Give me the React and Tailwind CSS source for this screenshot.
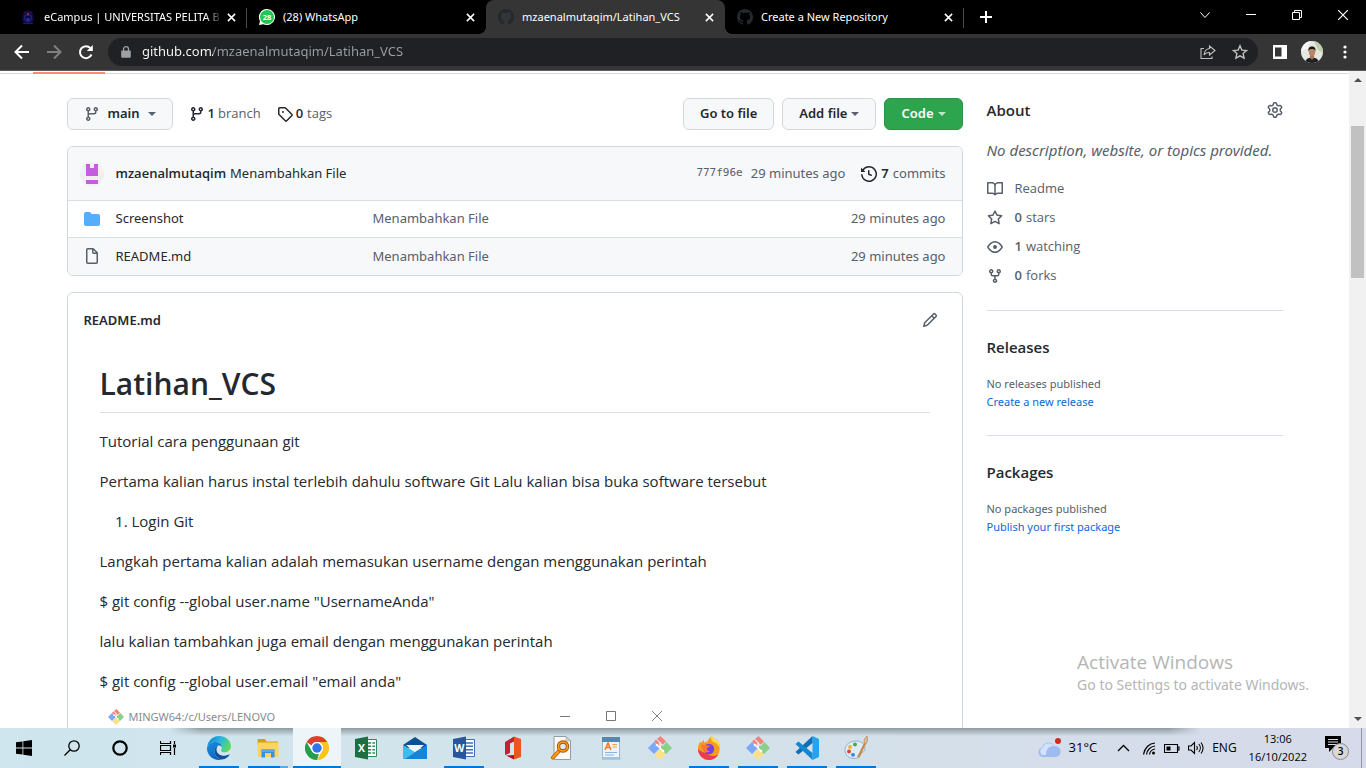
import React from "react";

const P = {
  branch:
    "M11.75 2.5a.75.75 0 100 1.5.75.75 0 000-1.5zm-2.25.75a2.25 2.25 0 113 2.122V6A2.5 2.5 0 0110 8.5H6a1 1 0 00-1 1v1.128a2.251 2.251 0 11-1.5 0V5.372a2.25 2.25 0 111.5 0v1.836A2.492 2.492 0 016 7h4a1 1 0 001-1v-.628A2.25 2.25 0 019.5 3.25zM4.25 12a.75.75 0 100 1.5.75.75 0 000-1.5zM3.5 3.25a.75.75 0 111.5 0 .75.75 0 01-1.5 0z",
  tag: "M2.5 7.775V2.75a.25.25 0 01.25-.25h5.025a.25.25 0 01.177.073l6.25 6.25a.25.25 0 010 .354l-5.025 5.025a.25.25 0 01-.354 0l-6.25-6.25a.25.25 0 01-.073-.177zm-1.5 0V2.75C1 1.784 1.784 1 2.75 1h5.025c.464 0 .91.184 1.238.513l6.25 6.25a1.75 1.75 0 010 2.474l-5.026 5.026a1.75 1.75 0 01-2.474 0l-6.25-6.25A1.75 1.75 0 011 7.775zM6 5a1 1 0 100 2 1 1 0 000-2z",
  history:
    "M1.643 3.143L.427 1.927A.25.25 0 000 2.104V5.75c0 .138.112.25.25.25h3.646a.25.25 0 00.177-.427L2.715 4.215a6.5 6.5 0 11-1.18 4.458.75.75 0 10-1.493.154 8.001 8.001 0 101.6-5.684zM7.75 4a.75.75 0 01.75.75v2.992l2.028.812a.75.75 0 01-.557 1.392l-2.5-1A.75.75 0 017 8.25v-3.5A.75.75 0 017.75 4z",
  folder:
    "M1.75 1A1.75 1.75 0 000 2.75v10.5C0 14.216.784 15 1.75 15h12.5A1.75 1.75 0 0016 13.25v-8.5A1.75 1.75 0 0014.25 3h-6.5a.25.25 0 01-.2-.1l-.9-1.2c-.33-.44-.85-.7-1.4-.7h-3.5z",
  file: "M3.75 1.5a.25.25 0 00-.25.25v12.5c0 .138.112.25.25.25h8.5a.25.25 0 00.25-.25V6H9.75A1.75 1.75 0 018 4.25V1.5H3.75zm5.75.56v2.19c0 .138.112.25.25.25h2.19L9.5 2.06zM2 1.75C2 .784 2.784 0 3.75 0h5.086c.464 0 .909.184 1.237.513l3.414 3.414c.329.328.513.773.513 1.237v9.086A1.75 1.75 0 0112.25 16h-8.5A1.75 1.75 0 012 14.25V1.75z",
  pencil:
    "M11.013 1.427a1.75 1.75 0 012.474 0l1.086 1.086a1.75 1.75 0 010 2.474l-8.61 8.61c-.21.21-.47.364-.756.445l-3.251.93a.75.75 0 01-.927-.928l.929-3.25a1.75 1.75 0 01.445-.758l8.61-8.61zm1.414 1.06a.25.25 0 00-.354 0L10.811 3.75l1.439 1.44 1.263-1.263a.25.25 0 000-.354l-1.086-1.086zM11.189 6.25L9.75 4.81l-6.286 6.287a.25.25 0 00-.064.108l-.558 1.953 1.953-.558a.249.249 0 00.108-.064l6.286-6.286z",
  book: "M0 1.75A.75.75 0 01.75 1h4.253c1.227 0 2.317.59 3 1.501A3.744 3.744 0 0111.006 1h4.245a.75.75 0 01.75.75v10.5a.75.75 0 01-.75.75h-4.507a2.25 2.25 0 00-1.591.659l-.622.621a.75.75 0 01-1.06 0l-.622-.621A2.25 2.25 0 005.258 13H.75a.75.75 0 01-.75-.75V1.75zm8.755 3a2.25 2.25 0 012.25-2.25H14.5v9h-3.757c-.71 0-1.4.201-1.992.572l.004-7.322zm-1.504 7.324l.004-5.073-.002-2.253A2.25 2.25 0 005.003 2.5H1.5v9h3.757a3.75 3.75 0 011.994.574z",
  star: "M8 .25a.75.75 0 01.673.418l1.882 3.815 4.21.612a.75.75 0 01.416 1.279l-3.046 2.97.719 4.192a.75.75 0 01-1.088.791L8 12.347l-3.766 1.98a.75.75 0 01-1.088-.79l.72-4.194L.818 6.374a.75.75 0 01.416-1.28l4.21-.611L7.327.668A.75.75 0 018 .25zm0 2.445L6.615 5.5a.75.75 0 01-.564.41l-3.097.45 2.24 2.184a.75.75 0 01.216.664l-.528 3.084 2.769-1.456a.75.75 0 01.698 0l2.77 1.456-.53-3.084a.75.75 0 01.216-.664l2.24-2.183-3.096-.45a.75.75 0 01-.564-.41L8 2.694v.001z",
  eye: "M1.679 7.932c.412-.621 1.242-1.75 2.366-2.717C5.175 4.242 6.527 3.5 8 3.5c1.473 0 2.824.742 3.955 1.715 1.124.967 1.954 2.096 2.366 2.717a.119.119 0 010 .136c-.412.621-1.242 1.75-2.366 2.717C10.825 11.758 9.473 12.5 8 12.5c-1.473 0-2.824-.742-3.955-1.715C2.92 9.818 2.09 8.69 1.679 8.068a.119.119 0 010-.136zM8 2c-1.981 0-3.67.992-4.933 2.078C1.797 5.169.88 6.423.43 7.1a1.619 1.619 0 000 1.798c.45.678 1.367 1.932 2.637 3.024C4.329 13.008 6.019 14 8 14c1.981 0 3.67-.992 4.933-2.078 1.27-1.091 2.187-2.345 2.637-3.023a1.619 1.619 0 000-1.798c-.45-.678-1.367-1.932-2.637-3.023C11.671 2.992 9.981 2 8 2zm0 8a2 2 0 100-4 2 2 0 000 4z",
  fork: "M5 3.25a.75.75 0 11-1.5 0 .75.75 0 011.5 0zm0 2.122a2.25 2.25 0 10-1.5 0v.878A2.25 2.25 0 005.75 8.5h1.5v2.128a2.251 2.251 0 101.5 0V8.5h1.5a2.25 2.25 0 002.25-2.25v-.878a2.25 2.25 0 10-1.5 0v.878a.75.75 0 01-.75.75h-4.5A.75.75 0 015 6.25v-.878zm3.75 7.378a.75.75 0 11-1.5 0 .75.75 0 011.5 0zm3-8.75a.75.75 0 100-1.5.75.75 0 000 1.5z",
  gear: "M7.429 1.525a6.593 6.593 0 011.142 0c.036.003.108.036.137.146l.289 1.105c.147.56.55.967.997 1.189.174.086.341.183.501.29.417.278.97.423 1.53.27l1.102-.303c.11-.03.175.016.195.046.219.31.41.641.573.989.014.031.022.11-.059.19l-.815.806c-.411.406-.562.957-.53 1.456a4.588 4.588 0 010 .582c-.032.499.119 1.05.53 1.456l.815.806c.08.08.073.159.059.19a6.494 6.494 0 01-.573.99c-.02.029-.086.074-.195.045l-1.103-.303c-.559-.153-1.112-.008-1.529.27-.16.107-.327.204-.5.29-.449.222-.851.628-.998 1.189l-.289 1.105c-.029.11-.101.143-.137.146a6.613 6.613 0 01-1.142 0c-.036-.003-.108-.037-.137-.146l-.289-1.105c-.147-.56-.55-.967-.997-1.189a4.502 4.502 0 01-.501-.29c-.417-.278-.97-.423-1.53-.27l-1.102.303c-.11.03-.175-.016-.195-.046a6.492 6.492 0 01-.573-.989c-.014-.031-.022-.11.059-.19l.815-.806c.411-.406.562-.957.53-1.456a4.587 4.587 0 010-.582c.032-.499-.119-1.05-.53-1.456l-.815-.806c-.08-.08-.073-.159-.059-.19a6.44 6.44 0 01.573-.99c.02-.029.086-.075.195-.045l1.103.303c.559.153 1.112.008 1.529-.27.16-.107.327-.204.5-.29.449-.222.851-.628.998-1.189l.289-1.105c.029-.11.101-.143.137-.146zM8 0c-.236 0-.47.01-.701.03-.743.065-1.29.615-1.458 1.261l-.29 1.106c-.017.066-.078.158-.211.224a5.994 5.994 0 00-.668.386c-.123.082-.233.09-.3.071L3.27 2.776c-.644-.177-1.392.02-1.82.63a7.977 7.977 0 00-.704 1.217c-.315.675-.111 1.422.363 1.891l.815.806c.05.048.098.147.088.294a6.084 6.084 0 000 .772c.01.147-.038.246-.088.294l-.815.806c-.474.469-.678 1.216-.363 1.891.2.428.436.835.704 1.218.428.609 1.176.806 1.82.63l1.103-.303c.066-.019.176-.011.299.071.213.143.436.272.668.386.133.066.194.158.212.224l.289 1.106c.169.646.715 1.196 1.458 1.26a8.094 8.094 0 001.402 0c.743-.064 1.29-.614 1.458-1.26l.29-1.106c.017-.066.078-.158.211-.224a5.98 5.98 0 00.668-.386c.123-.082.233-.09.3-.071l1.102.302c.644.177 1.392-.02 1.82-.63.268-.382.505-.789.704-1.217.315-.675.111-1.422-.364-1.891l-.814-.806c-.05-.048-.098-.147-.088-.294a6.1 6.1 0 000-.772c-.01-.147.039-.246.088-.294l.814-.806c.475-.469.679-1.216.364-1.891a7.992 7.992 0 00-.704-1.218c-.428-.609-1.176-.806-1.82-.63l-1.103.303c-.066.019-.176.011-.299-.071a5.991 5.991 0 00-.668-.386c-.133-.066-.194-.158-.212-.224L10.16 1.29C9.99.645 9.444.095 8.701.031A8.094 8.094 0 008 0zm1.5 8a1.5 1.5 0 11-3 0 1.5 1.5 0 013 0zM11 8a3 3 0 11-6 0 3 3 0 016 0z",
  github:
    "M8 0C3.58 0 0 3.58 0 8c0 3.54 2.29 6.53 5.47 7.59.4.07.55-.17.55-.38 0-.19-.01-.82-.01-1.49-2.01.37-2.53-.49-2.69-.94-.09-.23-.48-.94-.82-1.13-.28-.15-.68-.52-.01-.53.63-.01 1.08.58 1.23.82.72 1.21 1.87.87 2.33.66.07-.52.28-.87.51-1.07-1.78-.2-3.64-.89-3.64-3.95 0-.87.31-1.59.82-2.15-.08-.2-.36-1.02.08-2.12 0 0 .67-.21 2.2.82.64-.18 1.32-.27 2-.27.68 0 1.36.09 2 .27 1.53-1.04 2.2-.82 2.2-.82.44 1.1.16 1.92.08 2.12.51.56.82 1.27.82 2.15 0 3.07-1.87 3.75-3.65 3.95.29.25.54.73.54 1.48 0 1.07-.01 1.93-.01 2.2 0 .21.15.46.55.38A8.013 8.013 0 0016 8c0-4.42-3.58-8-8-8z",
};

function Oct({ name, className = "" }) {
  return (
    <svg viewBox="0 0 16 16" fill="currentColor" fillRule="evenodd" className={`size-4 shrink-0 ${className}`} aria-hidden="true">
      <path d={P[name]} />
    </svg>
  );
}

function Stroke({ d, className = "size-4", w = 1, box = "0 0 16 16", children }) {
  return (
    <svg viewBox={box} fill="none" stroke="currentColor" strokeWidth={w} className={`shrink-0 ${className}`} aria-hidden="true">
      <path d={d} />
      {children}
    </svg>
  );
}

const Caret = ({ className = "" }) => (
  <svg viewBox="0 0 8 4" className={`h-1 w-2 shrink-0 ${className}`} fill="currentColor" aria-hidden="true">
    <path d="M0 0h8L4 4z" />
  </svg>
);

/* ---------- browser chrome ---------- */

const CampusIcon = () => (
  <svg viewBox="0 0 16 16" className="size-4 shrink-0" aria-hidden="true">
    <path d="M8 1l5 3 1 6-2 4.500H4L2 10l1-6z" fill="#0b0b3e" />
    <circle cx="8" cy="9" r="3.500" fill="none" stroke="#20208a" strokeWidth="1.300" />
    <path d="M3 14.500h10M4 4.500l2-2M12 4.500l-2-2" stroke="#1c1c70" strokeWidth="1.200" />
    <path d="M8 3c1 1.500 1.200 2.500 0 4-1.200-1.500-1-2.500 0-4z" fill="#c22a17" />
    <path d="M6 9.500h4l-1 2H7z" fill="#3438b0" />
  </svg>
);

const WhatsAppIcon = () => (
  <svg viewBox="0 0 16 16" className="size-4 shrink-0" aria-hidden="true">
    <path d="M8 0a8 8 0 11-3.500 15.200L0 16l1-4A8 8 0 018 0z" fill="#fff" />
    <circle cx="8" cy="8" r="7" fill="#1fc94f" />
    <text x="8" y="10.600" fontSize="7.500" fontWeight="700" textAnchor="middle" fill="#fff" fontFamily="Open Sans, sans-serif">
      28
    </text>
  </svg>
);

const GithubIcon = () => <Oct name="github" className="text-[#24292f]" />;

const tabs = [
  { title: "eCampus | UNIVERSITAS PELITA B", icon: CampusIcon, fade: true },
  { title: "(28) WhatsApp", icon: WhatsAppIcon },
  { title: "mzaenalmutaqim/Latihan_VCS", icon: GithubIcon, active: true },
  { title: "Create a New Repository", icon: GithubIcon },
];

function Tab({ title, icon: Icon, active, fade, divider }) {
  return (
    <div
      className={`relative flex h-[34px] w-[239px] min-w-0 items-center pr-2 pl-3 ${active ? "rounded-t-lg bg-[#353535]" : ""}`}
    >
      {active && (
        <>
          <span className="absolute bottom-0 -left-2 size-2 bg-[radial-gradient(circle_at_0_0,#000_8px,#353535_8px)]" />
          <span className="absolute -right-2 bottom-0 size-2 bg-[radial-gradient(circle_at_100%_0,#000_8px,#353535_8px)]" />
        </>
      )}
      <Icon />
      <a
        href="#tab"
        className={`ml-2 min-w-0 flex-1 overflow-hidden font-['Noto_Sans','Open_Sans',sans-serif] text-[11px] whitespace-nowrap text-white ${
          fade ? "mask-r-from-90% mask-r-to-100%" : ""
        }`}
      >
        {title}
      </a>
      <button aria-label={`Close ${title}`} className="flex size-4 items-center justify-center text-white">
        <Stroke d="M1 1l8 8M9 1l-8 8" box="0 0 10 10" className="size-[9px]" w={1.7} />
      </button>
      {divider && <span className="absolute top-2 right-0 h-5 w-px bg-[#4a4a4a]" />}
    </div>
  );
}

function TabBar() {
  return (
    <div className="flex h-[34px] items-center bg-black pl-2 text-white">
      {tabs.map((t, i) => (
        <Tab key={t.title} {...t} divider={i === 0 || i === 3} />
      ))}
      <button aria-label="New tab" className="ml-2 flex size-7 items-center justify-center">
        <Stroke d="M6 0v12M0 6h12" box="0 0 12 12" className="size-3" w={2} />
      </button>
      <div className="ml-auto flex h-full items-start pb-1">
        <button aria-label="Search tabs" className="flex h-[29px] w-[46px] items-center justify-center">
          <Stroke d="M.5 .5l4.500 5 4.500-5" box="0 0 10 6" className="h-[6px] w-[10px]" w={1} />
        </button>
        <button aria-label="Minimize" className="flex h-[29px] w-[46px] items-center justify-center">
          <span className="h-px w-[10px] bg-white" />
        </button>
        <button aria-label="Restore" className="flex h-[29px] w-[46px] items-center justify-center">
          <Stroke d="M.5 2.500h7v7h-7zM2.500 2.500v-2h7v7h-2" box="0 0 10 10" className="size-[10px]" />
        </button>
        <button aria-label="Close" className="flex h-[29px] w-[46px] items-center justify-center">
          <Stroke d="M0 0l10 10M10 0L0 10" box="0 0 10 10" className="size-[10px]" w={1.2} />
        </button>
      </div>
    </div>
  );
}

function Toolbar() {
  return (
    <div className="flex h-[37px] items-center border-b border-[#5c5c5c] bg-[#353535] pr-[13px] pl-[14px] text-white">
      <button aria-label="Back" className="mr-4">
        <Stroke d="M15 8H2M8 1.500L1.500 8 8 14.500" w={2} />
      </button>
      <button aria-label="Forward" className="mr-4 text-[#818181]">
        <Stroke d="M1 8h13M8 1.500L14.500 8 8 14.500" w={2} />
      </button>
      <button aria-label="Reload" className="mr-[14px]">
        <svg viewBox="0 0 16 16" className="size-4" aria-hidden="true">
          <path d="M13.500 10.500A6 6 0 1112.500 4.200" fill="none" stroke="#fff" strokeWidth="2" />
          <path d="M14.800 1v6H8.800z" fill="#fff" />
        </svg>
      </button>
      <div className="flex h-7 min-w-0 flex-1 items-center rounded-full bg-[#202124] pr-[10px] pl-[13px]">
        <svg viewBox="0 0 10 12" className="h-3 w-[10px] shrink-0" aria-hidden="true">
          <path d="M1 4.500h8a.8.8 0 01.8.8v5.400a1 1 0 01-1 1H1.200a1 1 0 01-1-1V5.300a.8.8 0 01.8-.8z" fill="#9aa0a6" />
          <path d="M2.500 5V3a2.500 2.300 0 015 0v2" fill="none" stroke="#9aa0a6" strokeWidth="1.300" />
        </svg>
        <input
          aria-label="Address"
          defaultValue="github.com/mzaenalmutaqim/Latihan_VCS"
          className="ml-[11px] min-w-0 flex-1 bg-[linear-gradient(90deg,#ffffff_71px,#9aa0a6_71px)] bg-clip-text font-['Noto_Sans','Open_Sans',sans-serif] text-[13px] text-transparent outline-none"
        />
        <button aria-label="Share" className="mr-4 text-[#c0c0c0]">
          <Stroke
            d="M4 4.500H1v10h11v-2M9.500 2l5.500 4.500-5.500 4.500V8.500C7 8.500 5.200 9.200 4 11c.3-3 2-6 5.500-6.500z"
            w={1.1}
          />
        </button>
        <button aria-label="Bookmark" className="text-[#c0c0c0]">
          <Stroke d="M8 1.800l1.900 4.300 4.700.4-3.500 3.100 1 4.600L8 11.800l-4.100 2.400 1-4.600L1.400 6.500l4.700-.4z" w={1.4} />
        </button>
      </div>
      <button aria-label="Side panel" className="ml-[15px]">
        <svg viewBox="0 0 14 14" className="size-[14px]" aria-hidden="true">
          <path d="M0 0h14v14H0zM2 2.500v9h6.500v-9z" fill="#fff" fillRule="evenodd" />
        </svg>
      </button>
      <button aria-label="Profile" className="ml-[14px]">
        <svg viewBox="0 0 22 22" className="size-[22px] rounded-full" aria-hidden="true">
          <rect width="22" height="22" fill="#e4e6e0" />
          <path d="M13 0h9v12l-5-3z" fill="#bfd0a8" />
          <path d="M0 0h10L6 8 0 10z" fill="#f6f6f4" />
          <path d="M4 22c1-5 4-5.500 7-5.500s6 .5 7 5.500z" fill="#1f1f24" />
          <path d="M9 13h4v4l-2 2-2-2z" fill="#a67656" />
          <ellipse cx="11" cy="11" rx="3.200" ry="4.200" fill="#b98666" />
          <path d="M7.400 10.500C7 6.500 9 5.500 11 5.500s4 1 3.600 5c-.6-2-1.600-2.500-3.600-2.500s-3 .5-3.600 2.500z" fill="#17171a" />
        </svg>
      </button>
      <button aria-label="Menu" className="ml-[14px] flex w-4 justify-center">
        <svg viewBox="0 0 4 14" className="h-[14px] w-1" fill="#fff" aria-hidden="true">
          <circle cx="2" cy="2" r="1.600" />
          <circle cx="2" cy="7" r="1.600" />
          <circle cx="2" cy="12" r="1.600" />
        </svg>
      </button>
    </div>
  );
}

/* ---------- repository page ---------- */

const btn =
  "flex h-8 items-center rounded-md border border-[#d5d8db] bg-[#f6f8fa] px-4 font-['Noto_Sans','Open_Sans',sans-serif] text-[13px] font-semibold text-[#24292f]";

const files = [
  { name: "Screenshot", icon: "folder", tint: "text-[#54aeff]", row: "" },
  { name: "README.md", icon: "file", tint: "text-[#57606a]", row: "bg-[#f6f8fa]" },
];

function FileActions() {
  return (
    <div className="mb-4 flex items-center">
      <button className={btn}>
        <Oct name="branch" className="mr-2 text-[#57606a]" />
        main
        <Caret className="ml-2 text-[#57606a]" />
      </button>
      <a href="#branches" className="ml-4 flex items-center text-[13px] text-[#57606a]">
        <Oct name="branch" className="mr-[3px] text-[#24292f]" />
        <strong className="mr-[3px] font-semibold text-[#24292f]">1</strong>branch
      </a>
      <a href="#tags" className="ml-4 flex items-center text-[13px] text-[#57606a]">
        <Oct name="tag" className="mr-[3px] text-[#24292f]" />
        <strong className="mr-1 font-semibold text-[#24292f]">0</strong>tags
      </a>
      <div className="ml-auto flex gap-2">
        <button className={btn}>Go to file</button>
        <button className={btn}>
          Add file <Caret className="ml-1 text-[#57606a]" />
        </button>
        <button className="flex h-8 items-center rounded-md border border-[#2a9449] bg-[#2da44e] px-4 font-['Noto_Sans','Open_Sans',sans-serif] text-[13px] font-semibold text-white">
          Code <Caret className="ml-1 text-[#c0e4ca]" />
        </button>
      </div>
    </div>
  );
}

function FileBox() {
  return (
    <section className="mb-4 overflow-hidden rounded-md border border-[#d0d7de] font-['Noto_Sans','Open_Sans',sans-serif] text-[13px]">
      <div className="flex h-[53px] items-center bg-[#f6f8fa] px-4">
        <svg viewBox="0 0 24 24" className="-ml-1 size-6 shrink-0 rounded-full" aria-hidden="true">
          <rect width="24" height="24" fill="#f0f0f0" />
          <path d="M6 2h4v4h4V2h4v12H6zM6 18h12v4H6z" fill="#c35fdc" />
        </svg>
        <a href="#author" className="ml-3 font-['Open_Sans','Noto_Sans',sans-serif] font-semibold text-[#24292f]">
          mzaenalmutaqim
        </a>
        <a href="#commit" className="ml-1 text-[#24292f]">
          Menambahkan File
        </a>
        <a href="#sha" className="ml-auto font-['DejaVu_Sans_Mono','Liberation_Mono',monospace] text-[11px] text-[#57606a]">
          777f96e
        </a>
        <span className="ml-2 text-[#57606a]">29 minutes ago</span>
        <a href="#commits" className="ml-4 flex items-center text-[#57606a]">
          <Oct name="history" className="mr-1 text-[#24292f]" />
          <strong className="mr-1 font-semibold text-[#24292f]">7</strong>commits
        </a>
      </div>
      <table className="w-full table-fixed">
        <tbody>
          {files.map((f) => (
            <tr key={f.name} className={`h-[37px] border-t border-[#d8dee4] ${f.row}`}>
              <td className="w-12 pl-4">
                <Oct name={f.icon} className={f.tint} />
              </td>
              <td className="w-[257px]">
                <a href="#file" className="text-[#24292f]">
                  {f.name}
                </a>
              </td>
              <td>
                <a href="#message" className="text-[#57606a]">
                  Menambahkan File
                </a>
              </td>
              <td className="w-32 pr-4 text-right text-[#57606a]">29 minutes ago</td>
            </tr>
          ))}
        </tbody>
      </table>
    </section>
  );
}

const GitLogo = ({ className }) => (
  <svg viewBox="0 0 24 24" className={className} aria-hidden="true">
    <path d="M0 12l6-6 6 6-6 6z" fill="#7aa9f7" />
    <path d="M12.500 0l5.500 5.500-3 3-2-1.500-1 4.500-6-6 2-2 3 3 1-1-3-2.500z" fill="#f4827b" />
    <path d="M18.500 6L24 12l-6 6-5-5v-3l2.500-.5z" fill="#8bd08a" />
    <path d="M12 12.500l6 6-6 5.500-5.500-5.500z" fill="#fbe08a" />
    <path d="M9 9l6 6M12 12V6" stroke="#fff" strokeWidth="1.300" />
    <circle cx="9" cy="9" r="1.300" fill="#fff" />
    <circle cx="15" cy="15" r="1.300" fill="#fff" />
  </svg>
);

function Readme() {
  return (
    <section className="rounded-md border border-[#d0d7de] text-[15px] leading-6 text-[#24292f]">
      <div className="flex h-[55px] items-center justify-between px-4">
        <a href="#readme" className="font-['Noto_Sans','Open_Sans',sans-serif] text-[13px] font-semibold">
          README.md
        </a>
        <button aria-label="Edit this file" className="mr-2 text-[#57606a]">
          <Oct name="pencil" />
        </button>
      </div>
      <article className="px-8 pt-4">
        <h1 className="mb-4 border-b border-[#d8dee4] pb-2 text-[30px] leading-10 font-semibold">Latihan_VCS</h1>
        <p className="mb-4">Tutorial cara penggunaan git</p>
        <p className="mb-4">
          Pertama kalian harus instal terlebih dahulu software Git Lalu kalian bisa buka software tersebut
        </p>
        <ol className="mb-4 list-decimal pl-8">
          <li>Login Git</li>
        </ol>
        <p className="mb-4">Langkah pertama kalian adalah memasukan username dengan menggunakan perintah</p>
        <p className="mb-4">$ git config --global user.name "UsernameAnda"</p>
        <p className="mb-4">lalu kalian tambahkan juga email dengan menggunakan perintah</p>
        <p className="mb-3">$ git config --global user.email "email anda"</p>
        <figure className="flex h-60 w-[570px] items-start px-2 pt-1 text-[#8a8a8a]">
          <GitLogo className="size-4 shrink-0" />
          <figcaption className="ml-[5px] font-['Noto_Sans','Open_Sans',sans-serif] text-[11px] leading-4">
            MINGW64:/c/Users/LENOVO
          </figcaption>
          <span className="ml-auto flex items-center gap-9 pt-[2px] text-[#777]">
            <Stroke d="M0 5.500h10" box="0 0 10 10" className="size-[10px]" />
            <Stroke d="M.5 .5h9v9h-9z" box="0 0 10 10" className="size-[10px]" />
            <Stroke d="M0 0l10 10M10 0L0 10" box="0 0 10 10" className="size-[10px]" w={0.9} />
          </span>
        </figure>
      </article>
    </section>
  );
}

const stats = [
  { icon: "book", text: "Readme" },
  { icon: "star", count: "0", text: "stars" },
  { icon: "eye", count: "1", text: "watching" },
  { icon: "fork", count: "0", text: "forks" },
];

function SideSection({ title, note, link }) {
  return (
    <section className="mt-6 border-t border-[#d8dee4] pt-6 text-[11px] leading-[18px]">
      <h2 className="mb-4 text-[15px] leading-6 font-semibold text-[#24292f]">{title}</h2>
      <div className="font-['Noto_Sans','Open_Sans',sans-serif]">
        <p className="text-[#57606a]">{note}</p>
        <a href="#action" className="block text-[#0969da]">
          {link}
        </a>
      </div>
    </section>
  );
}

function Sidebar() {
  return (
    <aside className="w-[296px] shrink-0">
      <div className="flex items-center justify-between">
        <h2 className="text-[15px] leading-6 font-semibold text-[#24292f]">About</h2>
        <button aria-label="Edit repository metadata" className="text-[#57606a]">
          <Oct name="gear" />
        </button>
      </div>
      <p className="my-4 font-['Noto_Sans','Open_Sans',sans-serif] text-[15px] leading-6 whitespace-nowrap text-[#57606a] italic">
        No description, website, or topics provided.
      </p>
      <ul className="flex flex-col gap-2 text-[13px] leading-[21px] text-[#57606a]">
        {stats.map((s) => (
          <li key={s.text}>
            <a href="#stat" className="flex items-center">
              <Oct name={s.icon} className="mr-3" />
              {s.count && <strong className="mr-1 font-semibold">{s.count}</strong>}
              {s.text}
            </a>
          </li>
        ))}
      </ul>
      <SideSection title="Releases" note="No releases published" link="Create a new release" />
      <SideSection title="Packages" note="No packages published" link="Publish your first package" />
    </aside>
  );
}

function Scrollbar() {
  return (
    <div className="flex w-[17px] shrink-0 flex-col items-center justify-between bg-[#f1f1f1] py-[7px]" aria-hidden="true">
      <div className="flex flex-col items-center">
        <svg viewBox="0 0 8 4" className="h-1 w-2" fill="#505050">
          <path d="M0 4h8L4 0z" />
        </svg>
        <span className="mt-11 h-[152px] w-[13px] bg-[#c1c1c1]" />
      </div>
      <Caret className="text-[#505050]" />
    </div>
  );
}

/* ---------- taskbar ---------- */

const Svg = ({ children }) => (
  <svg viewBox="0 0 24 24" className="size-6" aria-hidden="true">
    {children}
  </svg>
);

const EdgeIcon = () => (
  <Svg>
    <defs>
      <linearGradient id="edgeTop" x1="0" y1="0.200" x2="1" y2="0.600">
        <stop offset="0" stopColor="#0f7fd6" />
        <stop offset="0.500" stopColor="#2ab8dc" />
        <stop offset="1" stopColor="#62dc58" />
      </linearGradient>
      <linearGradient id="edgeMid" x1="0" y1="0" x2="0.600" y2="1">
        <stop offset="0" stopColor="#1b8fe0" />
        <stop offset="1" stopColor="#0f62bc" />
      </linearGradient>
    </defs>
    <path d="M.2 11C1 4.500 6 0 12 0c6.800 0 12 4.800 12 10.200 0 3.600-2.800 6-6 6-2.600 0-4-.9-4-1.800 0-.7.9-1.200.9-2.900C14.900 8.500 12 6 8.500 6 4.500 6 1.500 8.500.2 11z" fill="url(#edgeTop)" />
    <path d="M.2 11C1.500 8.500 4.500 6 8.500 6c3.500 0 6.400 2.500 6.400 5.200-.9-1.400-2.500-1.900-4-1.400C8.600 10.600 7.200 13 7.500 16c.3 3.300 3 6.800 7.700 7.600-1 .3-2.100.4-3.200.4C5 24 0 18.500 0 12.500z" fill="url(#edgeMid)" />
    <path d="M10.900 9.800c-.9 1.300-1.600 2.700-1.300 4.700.5 3.500 4.200 5.500 8 5.200 1.700-.1 3-.6 4.100-1.200.7-.3 1 .1.600.7-1.500 2.300-4 3.900-7.100 4.400-4.700-.8-7.400-4.300-7.700-7.600-.3-3 1.100-5.400 3.400-6.200z" fill="#0f4f9e" />
  </Svg>
);

const ExplorerIcon = () => (
  <Svg>
    <path d="M1.500 4c0-.6.400-1 1-1H9l1.500 2.500H21c.6 0 1 .4 1 1V9H1.500z" fill="#dc9b1c" />
    <path d="M1.500 6.500h21V20c0 .5-.4 1-1 1h-19c-.6 0-1-.5-1-1z" fill="#fcd462" />
    <path d="M5.500 13.500h13v8H15V17H9v4.500H5.500z" fill="#3a8fdc" />
    <path d="M5.500 13.500h13v2.500h-13z" fill="#58a8ea" />
  </Svg>
);

const ChromeIcon = () => (
  <Svg>
    <circle cx="12" cy="12" r="12" fill="#fff" />
    <path d="M12 0a12 12 0 0110.400 6H12a6 6 0 00-5.400 3.400L1.600 6A12 12 0 0112 0z" fill="#e33b2e" />
    <path d="M22.400 6A12 12 0 0112 24l5.200-9A6 6 0 0012 6z" fill="#fcc419" />
    <path d="M1.600 6l5.200 9A6 6 0 0014 17.700L12 24A12 12 0 011.600 6z" fill="#279e4b" />
    <circle cx="12" cy="12" r="6" fill="#fff" />
    <circle cx="12" cy="12" r="4.700" fill="#2f74e8" />
  </Svg>
);

const OfficeDoc = ({ dark, line, letter, grid }) => (
  <Svg>
    <path d="M12 3.500h10.500v17H12z" fill="#fff" stroke={line} />
    <path d="M13 7h8M13 10.300h8M13 13.700h8M13 17h8" stroke={line} strokeWidth="1.600" />
    {grid && <path d="M17.800 5v14" stroke="#fff" strokeWidth="1.200" />}
    <path d="M1 3l13-2.500v23L1 21z" fill={dark} />
    <text x="7.400" y="16" fontSize="10.500" fontWeight="700" textAnchor="middle" fill="#fff" fontFamily="Open Sans, sans-serif">
      {letter}
    </text>
  </Svg>
);

const MailIcon = () => (
  <Svg>
    <path d="M0 9L12 1l12 8v3H0z" fill="#0c4f93" />
    <path d="M3 9h18l-9 8z" fill="#eef6fb" />
    <path d="M0 9l12 7.500L24 9v14H0z" fill="#2aa7ea" />
    <path d="M24 9v14H0z" fill="#1583d8" />
    <path d="M0 9l12 7.500L2 23H0z" fill="#3cbcf3" />
  </Svg>
);

const OfficeIcon = () => (
  <Svg>
    <path d="M4 6l9-5.500v5L9 7.500v9.500l-5 2z" fill="#c02434" />
    <path d="M13 .5l7 2.500v18l-7 2.500z" fill="#ec5420" />
    <path d="M5 19.500l8-.5v4.500z" fill="#a5142c" />
  </Svg>
);

const SearchDocIcon = () => (
  <Svg>
    <path d="M4 .5h12l4.500 4.500v18.500H4z" fill="#fafafa" stroke="#9a9a9a" />
    <path d="M16 .5V5h4.500z" fill="#d5d5d5" stroke="#9a9a9a" strokeWidth=".6" />
    <path d="M9.500 14.500L3 21.500" stroke="#c05c06" strokeWidth="4" strokeLinecap="round" />
    <path d="M9.500 14.500L3 21.500" stroke="#fba21a" strokeWidth="2" strokeLinecap="round" />
    <circle cx="13" cy="10.500" r="4.500" fill="#dfe8f0" stroke="#a84e04" strokeWidth="3.400" />
    <circle cx="13" cy="10.500" r="4.500" fill="none" stroke="#fba21a" strokeWidth="1.600" />
  </Svg>
);

const WordpadIcon = () => (
  <Svg>
    <path d="M3.500 1.500h17V23h-17z" fill="#eef4fa" stroke="#8fa9c0" strokeWidth=".8" />
    <path d="M3 1h18v5H3z" fill="#5686b2" />
    <path d="M6 14l3-7 3 7M7.200 11.500h3.600" fill="none" stroke="#ee7a1d" strokeWidth="1.500" />
    <path d="M13.500 8.500H18M13.500 11H18" stroke="#ee9a55" />
    <path d="M6 16.500h12M6 19h9" stroke="#8ab4dc" strokeWidth="1.200" />
    <path d="M4 21h17l1 2.500H3z" fill="#9fc3e2" />
  </Svg>
);

const FirefoxIcon = () => (
  <Svg>
    <path d="M12 2.500c1.500-.3 2-2 2-2.500 3 1.500 4 3.500 4.300 4.500 1-.3 1-1 1-1.500 2.500 2.500 3.700 6 3.500 9.500C22.500 19 18 24 12 24S1 19 1 13c0-3 .8-5.500 2.500-7.500l.8 1.500C5 5.500 6 4.500 7 4v2.500c2 0 3.500-.5 5-4z" fill="#fb9a1d" />
    <path d="M14 0c3 1.500 4 3.500 4.300 4.500 1-.3 1-1 1-1.500 2.500 2.500 3.700 6 3.500 9.500-1-3-3-5.500-6.300-6.500C14.500 5 13.500 3 14 0z" fill="#ffde3b" />
    <path d="M1 13c0 6 5 11 11 11 4 0 7.500-2.200 9.300-5.500-4 2.500-9 2-11.500-1.500C6 17 2.500 14.500 1 13z" fill="#ef3b53" />
    <circle cx="12" cy="13" r="5.200" fill="#7a3fe4" />
    <path d="M4 9c2-1 4-.5 5.500.5H13c0 1.500-2.500 1.800-3 3-.5 1.500 1 3 3 2.500-3 3-7.500 1.500-9-6z" fill="#fc7a27" />
  </Svg>
);

const VSCodeIcon = () => (
  <Svg>
    <path d="M17.500 0L24 3v18l-6.500 3z" fill="#26a2ee" />
    <path d="M17.500 0v7L3.500 18.500.5 16z" fill="#0d6fb8" />
    <path d="M17.500 24v-7L3.500 5.500.5 8z" fill="#1487d0" />
  </Svg>
);

const PaintIcon = () => (
  <Svg>
    <path d="M1 14C1 8.500 6 5 12 5s9 3.500 9 8c0 3-3 3-4 4s0 5-6 5.500C5 23 1 19 1 14z" fill="#dcecf4" stroke="#82a9bd" strokeWidth=".8" />
    <circle cx="6" cy="11" r="1.900" fill="#f0b428" />
    <circle cx="11" cy="8.500" r="1.900" fill="#4aa84e" />
    <circle cx="5" cy="15.500" r="1.900" fill="#dd4234" />
    <circle cx="9" cy="18.800" r="1.900" fill="#3f7fd6" />
    <path d="M13 21L20 7l2 1-6.500 13.500z" fill="#c88a4a" />
    <path d="M20 7c-.5-3 1-5 3-7 .8 3 .8 5.500-1 8z" fill="#e2b98c" stroke="#a5703c" strokeWidth=".5" />
  </Svg>
);

const apps = [
  { label: "Microsoft Edge", icon: <EdgeIcon />, bar: "single" },
  { label: "File Explorer", icon: <ExplorerIcon />, bar: "stacked" },
  { label: "Google Chrome", icon: <ChromeIcon />, bar: "active" },
  { label: "Excel", icon: <OfficeDoc dark="#1d6f42" line="#2f8a5a" letter="X" grid /> },
  { label: "Mail", icon: <MailIcon /> },
  { label: "Word", icon: <OfficeDoc dark="#28569a" line="#3b6fb8" letter="W" />, bar: "single" },
  { label: "Office", icon: <OfficeIcon /> },
  { label: "Document search", icon: <SearchDocIcon /> },
  { label: "WordPad", icon: <WordpadIcon /> },
  { label: "Git Bash", icon: <GitLogo className="size-6" /> },
  { label: "Firefox", icon: <FirefoxIcon />, bar: "single" },
  { label: "Git Bash window", icon: <GitLogo className="size-6" />, bar: "single" },
  { label: "Visual Studio Code", icon: <VSCodeIcon />, bar: "single" },
  { label: "Paint", icon: <PaintIcon />, bar: "single" },
];

function AppButton({ label, icon, bar }) {
  return (
    <button
      aria-label={label}
      className={`relative flex h-10 w-12 items-center justify-center ${bar === "active" ? "bg-[#eef5f9]" : ""}`}
    >
      {icon}
      {bar === "single" && <span className="absolute inset-x-1 bottom-0 h-[2px] bg-[#0078d7]" />}
      {bar === "active" && <span className="absolute inset-x-0 bottom-0 h-[2px] bg-[#0078d7]" />}
      {bar === "stacked" && (
        <span className="absolute inset-x-1 bottom-0 h-[2px] border-r-8 border-[#60a8e4] bg-[#0078d7]" />
      )}
    </button>
  );
}

function Taskbar() {
  const sys = "flex h-10 w-12 items-center justify-center";
  return (
    <footer className="relative flex h-10 shrink-0 items-center bg-linear-to-r from-[#cfe6ee] via-[#d3e2ea] to-[#d6daea] text-black">
      <span className="absolute top-0 right-[166px] left-[170px] h-2 bg-linear-to-b from-[#8d999f] to-transparent mask-x-from-97% mask-x-to-100%" />
      <button aria-label="Start" className={sys}>
        <svg viewBox="0 0 16 16" className="size-4" aria-hidden="true">
          <path d="M0 2.300l6.500-.9v6.100H0zM7.300 1.300L16 0v7.500H7.300zM0 8.400h6.500v6.200L0 13.700zM7.300 8.400H16V16l-8.700-1.300z" />
        </svg>
      </button>
      <button aria-label="Search" className={sys}>
        <Stroke d="M6.200 9.800L.5 15.500" w={1.3}>
          <circle cx="10" cy="6" r="5.200" />
        </Stroke>
      </button>
      <button aria-label="Cortana" className={sys}>
        <Stroke d="" w={2.2}>
          <circle cx="8" cy="8" r="6.700" />
        </Stroke>
      </button>
      <button aria-label="Task view" className={sys}>
        <svg viewBox="0 0 16 16" className="size-4" aria-hidden="true">
          <path d="M.5 1v2.500h10V1M.5 15v-2.500h10V15M.5 5.500h10v5H.5zM14.500 1v3M14.500 8v7" fill="none" stroke="#000" strokeWidth="1.200" />
          <path d="M13 4.500h3v3h-3z" />
        </svg>
      </button>
      <div className="ml-[3px] flex gap-px">
        {apps.map((a) => (
          <AppButton key={a.label} {...a} />
        ))}
      </div>

      <div className="ml-auto flex h-full items-center text-xs">
        <button className="mr-5 flex items-center text-[13px]">
          <svg viewBox="0 0 24 20" className="mr-2 h-5 w-6" aria-hidden="true">
            <path d="M5 19a5 5 0 010-9.500 6.500 6.500 0 0112-1.500 5.500 5.500 0 012 11z" fill="#9dbdf0" />
            <path d="M5 17a4 4 0 01.500-7 6.500 6.500 0 0111.500-2c-5 0-8 3-8 9z" fill="#d3e2fa" />
            <circle cx="21" cy="3" r="3" fill="#cf2b1f" />
          </svg>
          31°C
        </button>
        <button aria-label="Show hidden icons" className="mr-3">
          <Stroke d="M1 7l5.500-5.500L12 7" box="0 0 13 8" className="h-2 w-[13px]" w={1.3} />
        </button>
        <button aria-label="Wi-Fi" className="mr-2">
          <Stroke d="M1.500 13.500C2.500 7 7 2.500 13 2M4.500 13.500C5 9 8.500 5.500 13 5M7.500 13.500c.5-3 2.500-5 5.500-5.500" box="0 0 14 14" className="size-[14px]" w={1.2}>
            <circle cx="11.500" cy="12" r="1.500" fill="currentColor" stroke="none" />
          </Stroke>
        </button>
        <button aria-label="Battery" className="mr-2">
          <Stroke d="M.5 .5h13v8H.5zM13.500 3h1.500v3h-1.500" box="0 0 16 9" className="h-[9px] w-4" w={1.1}>
            <path d="M2.500 2.500h4v4h-4z" fill="currentColor" stroke="none" />
          </Stroke>
        </button>
        <button aria-label="Volume" className="mr-2">
          <Stroke d="M.5 5h2.500l3.500-3.500v11L3 9H.500zM8.500 5c1 1.200 1 2.800 0 4M10.800 3c2 2.300 2 5.700 0 8M13 1.500c2.500 3.300 2.500 7.700 0 11" box="0 0 16 14" className="h-[14px] w-4" w={1.1} />
        </button>
        <button className="mr-3">ENG</button>
        <button className="mr-[18px] text-center text-[11px] leading-[18px]">
          13:06
          <br />
          16/10/2022
        </button>
        <button aria-label="Notifications, 3 new" className="mr-3">
          <svg viewBox="0 0 24 24" className="size-6" aria-hidden="true">
            <path d="M0 0h16v12H8l-4 4v-4H0z" />
            <path d="M3 3.500h10M3 6h10M3 8.500h10" stroke="#d6daea" strokeWidth="1" />
            <circle cx="15.500" cy="15.500" r="8" fill="#d8d8d8" stroke="#8a8a8a" />
            <text x="15.500" y="19" fontSize="10" fontWeight="600" textAnchor="middle" fontFamily="Open Sans, sans-serif">
              3
            </text>
          </svg>
        </button>
        <span className="mr-1 h-full w-px bg-[#8f98a8]" />
      </div>
    </footer>
  );
}

export default function App() {
  return (
    <div className="flex h-screen flex-col overflow-hidden bg-white font-['Open_Sans','Noto_Sans',sans-serif]">
      <header className="shrink-0">
        <TabBar />
        <Toolbar />
      </header>
      <div className="relative flex min-h-0 flex-1">
        <main className="min-w-0 flex-1 overflow-hidden">
          <div className="h-[3px] border-b border-[#d8dbe4] pl-[33px]">
            <span className="block h-[3px] w-[72px] border-b-2 border-[#fd8c73]" />
          </div>
          <div className="mx-auto flex max-w-[1280px] gap-6 px-8 pt-6">
            <div className="min-w-0 flex-1">
              <FileActions />
              <FileBox />
              <Readme />
            </div>
            <Sidebar />
          </div>
        </main>
        <Scrollbar />
        <div className="pointer-events-none absolute right-[57px] bottom-8 text-[#b5b5b5]">
          <p className="text-[19px] leading-6">Activate Windows</p>
          <p className="font-['Noto_Sans','Open_Sans',sans-serif] text-sm leading-[22px]">
            Go to Settings to activate Windows.
          </p>
        </div>
      </div>
      <Taskbar />
    </div>
  );
}
